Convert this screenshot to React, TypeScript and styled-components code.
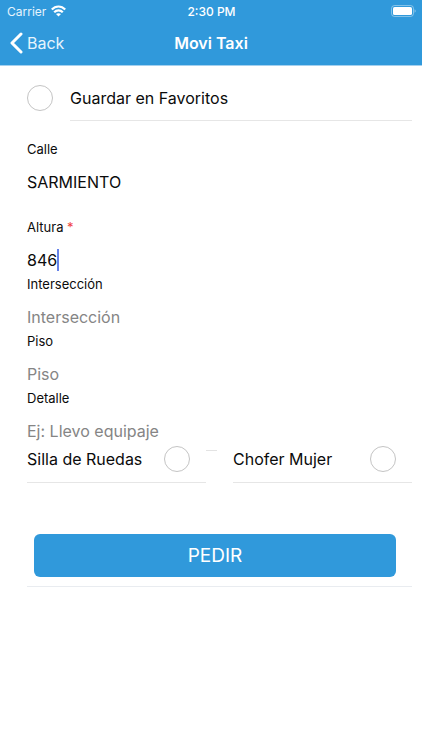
import { useId, useState } from "react";
import styled, { createGlobalStyle } from "styled-components";

const BLUE = "#3099db";

const GlobalStyle = createGlobalStyle`
  *, *::before, *::after { box-sizing: border-box; }
  body {
    margin: 0;
    background: #fff;
    color: #0b0b0b;
    font-family: Inter, "Liberation Sans", sans-serif;
    font-size: 16px;
  }
  input, button { font: inherit; }
`;

const Header = styled.header`
  background: ${BLUE};
  color: #fff;
  border-bottom: 1px solid #a3d0ef;
`;

const ThreeColumns = styled.div`
  display: grid;
  grid-template-columns: 1fr auto 1fr;
  align-items: center;
`;

const StatusBar = styled(ThreeColumns)`
  height: 22px;
  padding: 0 6px 0 7px;
  font-size: 12px;
`;

const Carrier = styled.span`
  display: flex;
  align-items: center;
  gap: 5px;
  color: #e6f4fd;
`;

const Clock = styled.span`
  font-weight: 500;
`;

const Battery = styled.svg`
  justify-self: end;
`;

const NavBar = styled(ThreeColumns)`
  height: 43px;
  padding: 0 10px 1px;
`;

const BackButton = styled.button`
  display: flex;
  align-items: center;
  justify-self: start;
  gap: 4px;
  padding: 0;
  border: 0;
  background: none;
  color: #e6f4fd;
`;

const Title = styled.h1`
  margin: 0;
  font-size: 16px;
  font-weight: 600;
`;

const Form = styled.form`
  padding: 10px 10px 0 27px;
`;

const FavoriteRow = styled.div`
  display: flex;
  gap: 17px;
`;

const CheckCircle = styled.input`
  appearance: none;
  flex: none;
  width: 26px;
  height: 26px;
  margin: 0;
  border: 1px solid #c4c4c4;
  border-radius: 50%;
  background: #fff;

  &:checked {
    border-color: ${BLUE};
    background: ${BLUE};
  }
`;

const FavoriteCheck = styled(CheckCircle)`
  margin-top: 9px;
`;

const FavoriteLabel = styled.label`
  flex: 1;
  height: 45px;
  line-height: 44px;
  border-bottom: 1px solid #e6e6e6;
`;

const Fields = styled.div`
  padding-top: 19px;
`;

const FieldBox = styled.div<{ $spaced?: boolean }>`
  display: flex;
  flex-direction: column;
  gap: 10px;
  padding-bottom: 1px;
  margin-bottom: ${({ $spaced }) => ($spaced ? "21px" : "0")};
`;

const FieldLabel = styled.label`
  font-size: 13px;
  line-height: 18px;
`;

const Required = styled.span`
  color: #f04141;
`;

const InputLine = styled.div`
  display: flex;
  align-items: center;
  height: 28px;
`;

const TextInput = styled.input<{ $fit?: boolean }>`
  field-sizing: ${({ $fit }) => ($fit ? "content" : "fixed")};
  flex: ${({ $fit }) => ($fit ? "none" : "1")};
  min-width: 0;
  height: 28px;
  padding: 0;
  border: 0;
  outline: 0;
  background: none;
  color: inherit;

  &::placeholder {
    color: #858585;
    opacity: 1;
  }
`;

const Caret = styled.span`
  width: 2px;
  height: 22px;
  background: #6582e8;
`;

const Options = styled.div`
  display: flex;
`;

const Option = styled.div`
  display: flex;
  flex: 1;
  align-items: center;
  justify-content: space-between;
  padding: 0 16px 10px 0;
  border-bottom: 1px solid #e6e6e6;
`;

const OptionLabel = styled.label`
  white-space: nowrap;
`;

const Tick = styled.span`
  width: 11px;
  height: 1px;
  margin: 4px 16px 0 0;
  background: #e3e3e3;
`;

const Actions = styled.div`
  margin-top: 51px;
  padding: 0 16px 9px 7px;
  border-bottom: 1px solid #e9ecf0;
`;

const SubmitButton = styled.button`
  display: block;
  width: 100%;
  height: 43px;
  padding: 0;
  border: 0;
  border-radius: 6px;
  background: ${BLUE};
  color: #fff;
  font-size: 19px;
`;

type FieldProps = {
  label: string;
  initial?: string;
  placeholder?: string;
  required?: boolean;
  spaced?: boolean;
  active?: boolean;
};

function Field({ label, initial = "", placeholder, required, spaced, active }: FieldProps) {
  const id = useId();
  const [value, setValue] = useState(initial);
  return (
    <FieldBox $spaced={spaced}>
      <FieldLabel htmlFor={id}>
        {label}
        {required && <Required> *</Required>}
      </FieldLabel>
      <InputLine>
        <TextInput
          id={id}
          type="text"
          value={value}
          placeholder={placeholder}
          required={required}
          $fit={active}
          onChange={(e) => setValue(e.target.value)}
        />
        {active && <Caret />}
      </InputLine>
    </FieldBox>
  );
}

function CheckOption({ label }: { label: string }) {
  const id = useId();
  return (
    <Option>
      <OptionLabel htmlFor={id}>{label}</OptionLabel>
      <CheckCircle id={id} type="checkbox" />
    </Option>
  );
}

export default function App() {
  return (
    <>
      <GlobalStyle />
      <Header>
        <StatusBar>
          <Carrier>
            Carrier
            <svg width="15" height="12" viewBox="0 0 15 12" fill="none" stroke="#fff" strokeWidth="2.2" aria-hidden="true">
              <path d="M0.8 4.5C4.6 0.5 10.4 0.5 14.2 4.5" />
              <path d="M3.2 7.2C5.6 4.7 9.4 4.7 11.8 7.2" />
              <path d="M7.5 11.6L5 9.1C6.4 7.8 8.6 7.8 10 9.1Z" fill="#fff" stroke="none" />
            </svg>
          </Carrier>
          <Clock>2:30 PM</Clock>
          <Battery width="25" height="12" viewBox="0 0 25 12" aria-hidden="true">
            <rect x="0.5" y="0.5" width="22" height="11" rx="3" fill="none" stroke="#fff" strokeOpacity="0.4" />
            <rect x="2" y="2" width="19" height="8" rx="1.6" fill="#fff" />
            <path d="M23.6 4.2C25 4.8 25 7.2 23.6 7.8Z" fill="#fff" fillOpacity="0.5" />
          </Battery>
        </StatusBar>
        <NavBar>
          <BackButton type="button">
            <svg width="13" height="22" viewBox="0 0 13 22" fill="none" stroke="#fff" strokeWidth="3" strokeLinecap="round" strokeLinejoin="round" aria-hidden="true">
              <path d="M11 2L2 11L11 20" />
            </svg>
            Back
          </BackButton>
          <Title>Movi Taxi</Title>
        </NavBar>
      </Header>
      <main>
        <Form onSubmit={(e) => e.preventDefault()}>
          <FavoriteRow>
            <FavoriteCheck id="favorite" type="checkbox" />
            <FavoriteLabel htmlFor="favorite">Guardar en Favoritos</FavoriteLabel>
          </FavoriteRow>
          <Fields>
            <Field label="Calle" initial="SARMIENTO" spaced />
            <Field label="Altura" initial="846" required active />
            <Field label="Intersección" placeholder="Intersección" />
            <Field label="Piso" placeholder="Piso" />
            <Field label="Detalle" placeholder="Ej: Llevo equipaje" />
          </Fields>
          <Options>
            <CheckOption label="Silla de Ruedas" />
            <Tick />
            <CheckOption label="Chofer Mujer" />
          </Options>
          <Actions>
            <SubmitButton type="submit">PEDIR</SubmitButton>
          </Actions>
        </Form>
      </main>
    </>
  );
}
